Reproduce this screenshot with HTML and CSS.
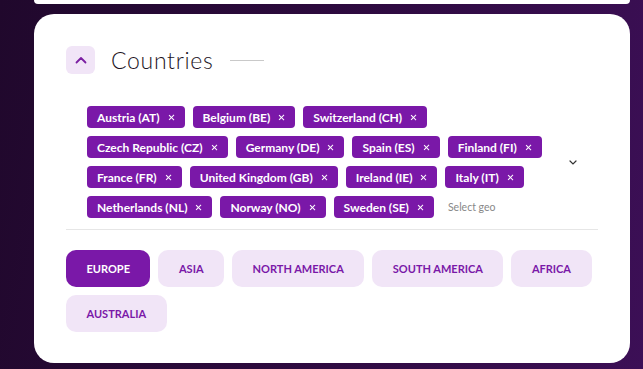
FILE: index.html
```html
<!DOCTYPE html>
<html lang="en">
<head>
    <meta charset="UTF-8">
    <meta name="viewport" content="width=device-width, initial-scale=1.0">
    <title>Countries</title>
    <link rel="stylesheet" href="styles.css">
</head>
<body>
    <div class="card card-prev"></div>

    <div class="card filter-card">
        <div class="filter-head">
            <button class="collapse-btn" aria-label="Collapse">
                <svg width="12" height="8" viewBox="0 0 12 8"><path d="M1.5 6.5 L6 2 L10.5 6.5" fill="none" stroke="#7b1fa2" stroke-width="1.8" stroke-linecap="round" stroke-linejoin="round"/></svg>
            </button>
            <h2>Countries</h2>
            <span class="head-line"></span>
        </div>

        <div class="geo-select">
            <div class="tags">
                <span class="tag">Austria (AT) <i class="x"></i></span>
                <span class="tag">Belgium (BE) <i class="x"></i></span>
                <span class="tag">Switzerland (CH) <i class="x"></i></span>
                <span class="tag">Czech Republic (CZ) <i class="x"></i></span>
                <span class="tag">Germany (DE) <i class="x"></i></span>
                <span class="tag">Spain (ES) <i class="x"></i></span>
                <span class="tag">Finland (FI) <i class="x"></i></span>
                <span class="tag">France (FR) <i class="x"></i></span>
                <span class="tag">United Kingdom (GB) <i class="x"></i></span>
                <span class="tag">Ireland (IE) <i class="x"></i></span>
                <span class="tag">Italy (IT) <i class="x"></i></span>
                <span class="tag">Netherlands (NL) <i class="x"></i></span>
                <span class="tag">Norway (NO) <i class="x"></i></span>
                <span class="tag">Sweden (SE) <i class="x"></i></span>
                <input class="geo-input" type="text" placeholder="Select geo">
            </div>
            <svg class="caret" width="8" height="5" viewBox="0 0 8 5"><path d="M1 1 L4 4 L7 1" fill="none" stroke="#333" stroke-width="1.2" stroke-linecap="round"/></svg>
        </div>

        <div class="divider"></div>

        <div class="regions">
            <button class="region active">EUROPE</button>
            <button class="region">ASIA</button>
            <button class="region">NORTH AMERICA</button>
            <button class="region">SOUTH AMERICA</button>
            <button class="region">AFRICA</button>
            <button class="region">AUSTRALIA</button>
        </div>
    </div>
</body>
</html>
```

FILE: styles.css
```css
body {
    margin: 0;
    height: 369px;
    overflow: hidden;
    font-family: Lato, "Liberation Sans", sans-serif;
    background: linear-gradient(100deg, #20082c 0%, #2c0a3d 45%, #3c0f56 100%);
}
.card {
    background-color: #fff;
    margin-left: 34px;
    width: 596px;
    box-sizing: border-box;
}
.card-prev {
    height: 4px;
    border-radius: 0 0 20px 20px;
    margin-bottom: 10px;
}
.filter-card {
    height: 349px;
    border-radius: 20px;
    padding: 32px 30px 0 32px;
}
.filter-head {
    display: flex;
    align-items: center;
    height: 28px;
}
.collapse-btn {
    width: 29px;
    height: 28px;
    border: none;
    border-radius: 6px;
    background-color: #f1e5f7;
    display: flex;
    align-items: center;
    justify-content: center;
    padding: 0;
}
.filter-head h2 {
    margin: 0 0 0 16px;
    font-size: 23px;
    font-weight: 300;
    color: #1d1424;
    letter-spacing: 0.7px;
}
.head-line {
    width: 34px;
    height: 1px;
    background-color: #c9c9c9;
    margin-left: 16px;
}
.geo-select {
    display: flex;
    align-items: center;
    margin-top: 32px;
    padding-left: 21px;
}
.tags {
    display: flex;
    flex-wrap: wrap;
    align-items: center;
    gap: 8px;
    width: 470px;
}
.tag {
    display: inline-flex;
    align-items: center;
    height: 22px;
    padding: 0 10px;
    border-radius: 4px;
    background-color: #7a18a8;
    color: #fff;
    font-size: 12px;
    font-weight: 700;
    white-space: nowrap;
}
.x {
    position: relative;
    width: 7px;
    height: 7px;
    margin-left: 8px;
}
.x::before, .x::after {
    content: "";
    position: absolute;
    left: 3px;
    top: 0;
    width: 1.3px;
    height: 7px;
    background-color: #fff;
    transform: rotate(45deg);
}
.x::after {
    transform: rotate(-45deg);
}
.geo-input {
    border: none;
    outline: none;
    width: 80px;
    margin-left: 4px;
    font-family: inherit;
    font-size: 10.5px;
    color: #333;
}
.geo-input::placeholder {
    color: #888;
}
.caret {
    margin-left: 12px;
}
.divider {
    height: 1px;
    background-color: #e6e6e6;
    margin: 11px 2px 20px 0;
}
.regions {
    display: flex;
    flex-wrap: wrap;
    gap: 8px 8px;
}
.region {
    height: 37px;
    padding: 0 20.5px;
    border: none;
    border-radius: 10px;
    background-color: #f1e5f7;
    color: #7a18a8;
    font-family: inherit;
    font-size: 11px;
    font-weight: 700;
}
.region.active {
    background-color: #7a18a8;
    color: #fff;
}
```
